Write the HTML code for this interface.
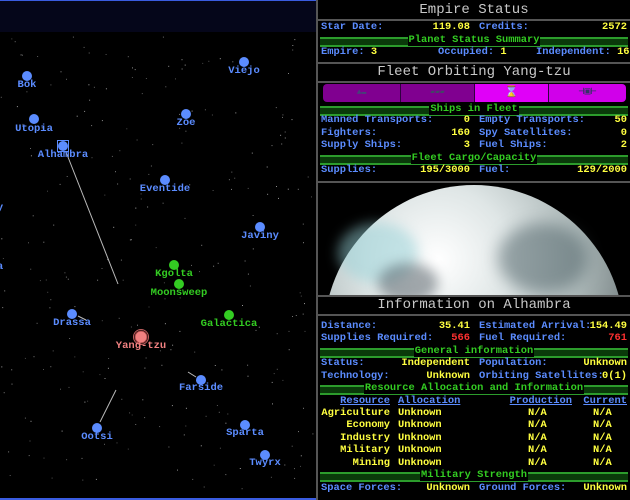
<!DOCTYPE html><html><head><style>
*{margin:0;padding:0;box-sizing:border-box}
body{width:630px;height:500px;background:#000;position:relative;overflow:hidden;font-family:"Liberation Mono",monospace;font-size:10.4px}
#map{position:absolute;left:0;top:0;width:316px;height:500px;background:#000}
#topbar{position:absolute;left:0;top:0;width:316px;height:32px;background:#05061a;border-top:1px solid #3a5ce0}
#botbar{position:absolute;left:0;top:498px;width:316px;height:2px;background:#3a5ce0}
.p{position:absolute;width:10px;height:10px;border-radius:50%;background:#5b8cff;margin:-5px 0 0 -5px}
.g{background:#33cc22}
.l{position:absolute;color:#5b8cff;transform:translateX(-50%);font-size:10.5px;line-height:10px;white-space:nowrap;font-weight:bold}
.lg{color:#33cc22}
#panel{position:absolute;left:316px;top:0;width:314px;height:500px;background:#000;border-left:2px solid #555}
.hl{position:absolute;left:0;width:312px;height:2px;background:#555}
.h{position:absolute;left:0;width:312px;text-align:center;color:#c8c8c8;font-size:14px;line-height:18px}
.t{position:absolute;line-height:12px;white-space:nowrap;font-weight:bold}
.b{color:#5b8cff}.y{color:#ffff40}.r{color:#ff3030}.gr{color:#33cc22}
.bar{position:absolute;left:2px;width:308px;height:12px}
.bar:before{content:"";position:absolute;left:0;right:0;top:3px;height:6px;border-top:2px solid #2c9c2c;border-bottom:2px solid #2c9c2c;background:#0a3a0a}
.bar span{position:relative;display:block;width:max-content;margin:0 auto;background:#000;color:#33cc22;line-height:12px;padding:0 1px;font-weight:bold}
.u{text-decoration:underline}
.rt{text-align:right}
</style></head><body>
<div id="map"></div>
<div id="topbar"></div>
<div id="botbar"></div>
<svg id="stars" style="position:absolute;left:0;top:0" width="316" height="500"></svg>
<svg style="position:absolute;left:0;top:0" width="316" height="500">
<line x1="66" y1="152" x2="118" y2="284" stroke="#bbb" stroke-width="1"/>
<line x1="78" y1="316" x2="86" y2="320" stroke="#bbb"/>
<line x1="188" y1="372" x2="196" y2="377" stroke="#bbb"/>
<line x1="100" y1="422" x2="116" y2="390" stroke="#bbb"/>
<rect x="57.5" y="140.5" width="11" height="11" fill="none" stroke="#5b8cff"/>
<circle cx="141" cy="337" r="6" fill="#f08080" stroke="#a04040" stroke-width="1"/>
<circle cx="141" cy="337" r="7.5" fill="none" stroke="#c06060" stroke-width="1"/>
</svg>
<script>
(function(){var s=12345;function r(){s=(s*16807)%2147483647;return s/2147483647;}
var h='';for(var i=0;i<260;i++){var x=r()*316,y=33+r()*465,c=Math.floor(70+r()*90);h+='<rect x="'+x.toFixed(1)+'" y="'+y.toFixed(1)+'" width="1" height="1" fill="rgb('+c+','+c+','+c+')"/>';}
document.getElementById('stars').innerHTML=h;})();
</script>
<div class="p" style="left:27px;top:76px"></div><div class="l" style="left:27px;top:80px">Bok</div>
<div class="p" style="left:244px;top:62px"></div><div class="l" style="left:244px;top:66px">Viejo</div>
<div class="p" style="left:34px;top:119px"></div><div class="l" style="left:34px;top:124px">Utopia</div>
<div class="p" style="left:63px;top:146px"></div><div class="l" style="left:63px;top:150px">Alhambra</div>
<div class="p" style="left:186px;top:114px"></div><div class="l" style="left:186px;top:118px">Zoe</div>
<div class="p" style="left:165px;top:180px"></div><div class="l" style="left:165px;top:184px">Eventide</div>
<div class="p" style="left:260px;top:227px"></div><div class="l" style="left:260px;top:231px">Javiny</div>
<div class="l" style="left:0px;top:203px">y</div><div class="l" style="left:0px;top:262px">a</div>
<div class="p g" style="left:174px;top:265px"></div><div class="l lg" style="left:174px;top:269px">Kgolta</div>
<div class="p g" style="left:179px;top:284px"></div><div class="l lg" style="left:179px;top:288px">Moonsweep</div>
<div class="p g" style="left:229px;top:315px"></div><div class="l lg" style="left:229px;top:319px">Galactica</div>
<div class="p" style="left:72px;top:314px"></div><div class="l" style="left:72px;top:318px">Drassa</div>
<div class="l" style="left:141px;top:341px;color:#f08080">Yang-tzu</div>
<div class="p" style="left:201px;top:380px"></div><div class="l" style="left:201px;top:383px">Farside</div>
<div class="p" style="left:97px;top:428px"></div><div class="l" style="left:97px;top:432px">Ootsi</div>
<div class="p" style="left:245px;top:425px"></div><div class="l" style="left:245px;top:428px">Sparta</div>
<div class="p" style="left:265px;top:455px"></div><div class="l" style="left:265px;top:458px">Twyrx</div>

<div id="panel">
<div class="h" style="top:1px">Empire Status</div>
<div class="hl" style="top:19px"></div>
<div class="t b" style="left:3px;top:21px">Star Date:</div>
<div class="t y rt" style="right:160px;top:21px">119.08</div>
<div class="t b" style="left:161px;top:21px">Credits:</div>
<div class="t y rt" style="right:3px;top:21px">2572</div>
<div class="bar" style="top:34px"><span>Planet Status Summary</span></div>
<div class="t b" style="left:3px;top:46px">Empire: <span class="y">3</span></div>
<div class="t b" style="left:120px;top:46px">Occupied: <span class="y">1</span></div>
<div class="t b" style="left:218px;top:46px">Independent: <span class="y">16</span></div>
<div class="hl" style="top:62px"></div>
<div class="h" style="top:63px">Fleet Orbiting Yang-tzu</div>
<div class="hl" style="top:81px"></div>
<div style="position:absolute;left:5px;top:84px;width:77px;height:18px;background:#800090;border-radius:4px 0 0 4px;color:#447;text-align:center;font-size:8px;line-height:18px">▲▬</div>
<div style="position:absolute;left:82px;top:84px;width:74px;height:18px;background:#800090;border-left:1px solid #300040;color:#446;text-align:center;font-size:8px;line-height:18px">▰▰▰</div>
<div style="position:absolute;left:156px;top:84px;width:74px;height:18px;background:#e000f8;border-left:1px solid #300040;color:#553;text-align:center;font-size:11px;line-height:18px">⌛</div>
<div style="position:absolute;left:230px;top:84px;width:78px;height:18px;background:#d000ea;border-left:1px solid #300040;border-radius:0 4px 4px 0;color:#336;text-align:center;font-size:10px;line-height:18px">⊣▣⊢</div>
<div class="bar" style="top:103px"><span>Ships in Fleet</span></div>
<div class="t b" style="left:3px;top:114px">Manned Transports:</div><div class="t y rt" style="right:160px;top:114px">0</div>
<div class="t b" style="left:161px;top:114px">Empty Transports:</div><div class="t y rt" style="right:3px;top:114px">50</div>
<div class="t b" style="left:3px;top:127px">Fighters:</div><div class="t y rt" style="right:160px;top:127px">160</div>
<div class="t b" style="left:161px;top:127px">Spy Satellites:</div><div class="t y rt" style="right:3px;top:127px">0</div>
<div class="t b" style="left:3px;top:139px">Supply Ships:</div><div class="t y rt" style="right:160px;top:139px">3</div>
<div class="t b" style="left:161px;top:139px">Fuel Ships:</div><div class="t y rt" style="right:3px;top:139px">2</div>
<div class="bar" style="top:152px"><span>Fleet Cargo/Capacity</span></div>
<div class="t b" style="left:3px;top:164px">Supplies:</div><div class="t y rt" style="right:160px;top:164px">195/3000</div>
<div class="t b" style="left:161px;top:164px">Fuel:</div><div class="t y rt" style="right:3px;top:164px">129/2000</div>
<div class="hl" style="top:181px"></div>
<div style="position:absolute;left:0;top:183px;width:312px;height:113px;overflow:hidden;background:#000">
<div style="position:absolute;left:6px;top:2px;width:300px;height:300px;border-radius:50%;background:radial-gradient(circle at 38% 25%,#ffffff 0%,#dfe6e6 25%,#aab6b6 50%,#6a7476 72%,#3a4044 100%)"></div>
<div style="position:absolute;left:20px;top:40px;width:80px;height:60px;border-radius:50%;background:rgba(150,210,215,.5);filter:blur(6px)"></div>
<div style="position:absolute;left:180px;top:40px;width:90px;height:70px;border-radius:50%;background:rgba(70,90,95,.5);filter:blur(8px)"></div>
<div style="position:absolute;left:60px;top:80px;width:60px;height:40px;border-radius:50%;background:rgba(60,70,80,.45);filter:blur(6px)"></div>
</div>
<div class="hl" style="top:295px"></div>
<div class="h" style="top:296px">Information on Alhambra</div>
<div class="hl" style="top:314px"></div>
<div class="t b" style="left:3px;top:320px">Distance:</div><div class="t y rt" style="right:160px;top:320px">35.41</div>
<div class="t b" style="left:161px;top:320px">Estimated Arrival:</div><div class="t y rt" style="right:3px;top:320px">154.49</div>
<div class="t b" style="left:3px;top:332px">Supplies Required:</div><div class="t r rt" style="right:160px;top:332px">566</div>
<div class="t b" style="left:161px;top:332px">Fuel Required:</div><div class="t r rt" style="right:3px;top:332px">761</div>
<div class="bar" style="top:345px"><span>General information</span></div>
<div class="t b" style="left:3px;top:357px">Status:</div><div class="t y rt" style="right:160px;top:357px">Independent</div>
<div class="t b" style="left:161px;top:357px">Population:</div><div class="t y rt" style="right:3px;top:357px">Unknown</div>
<div class="t b" style="left:3px;top:370px">Technology:</div><div class="t y rt" style="right:160px;top:370px">Unknown</div>
<div class="t b" style="left:161px;top:370px">Orbiting Satellites:</div><div class="t y rt" style="right:3px;top:370px">0(1)</div>
<div class="bar" style="top:382px"><span>Resource Allocation and Information</span></div>
<div class="t b u rt" style="right:240px;top:395px">Resource</div>
<div class="t b u" style="left:80px;top:395px">Allocation</div>
<div class="t b u rt" style="right:58px;top:395px">Production</div>
<div class="t b u rt" style="right:3px;top:395px">Current</div>
<div class="t y rt" style="right:240px;top:407px;line-height:12.4px">Agriculture<br>Economy<br>Industry<br>Military<br>Mining</div>
<div class="t y" style="left:80px;top:407px;line-height:12.4px">Unknown<br>Unknown<br>Unknown<br>Unknown<br>Unknown</div>
<div class="t y" style="left:210px;top:407px;line-height:12.4px">N/A<br>N/A<br>N/A<br>N/A<br>N/A</div>
<div class="t y" style="left:275px;top:407px;line-height:12.4px">N/A<br>N/A<br>N/A<br>N/A<br>N/A</div>
<div class="bar" style="top:469px"><span>Military Strength</span></div>
<div class="t b" style="left:3px;top:482px">Space Forces:</div><div class="t y rt" style="right:160px;top:482px">Unknown</div>
<div class="t b" style="left:161px;top:482px">Ground Forces:</div><div class="t y rt" style="right:3px;top:482px">Unknown</div>
</div>
</body></html>
